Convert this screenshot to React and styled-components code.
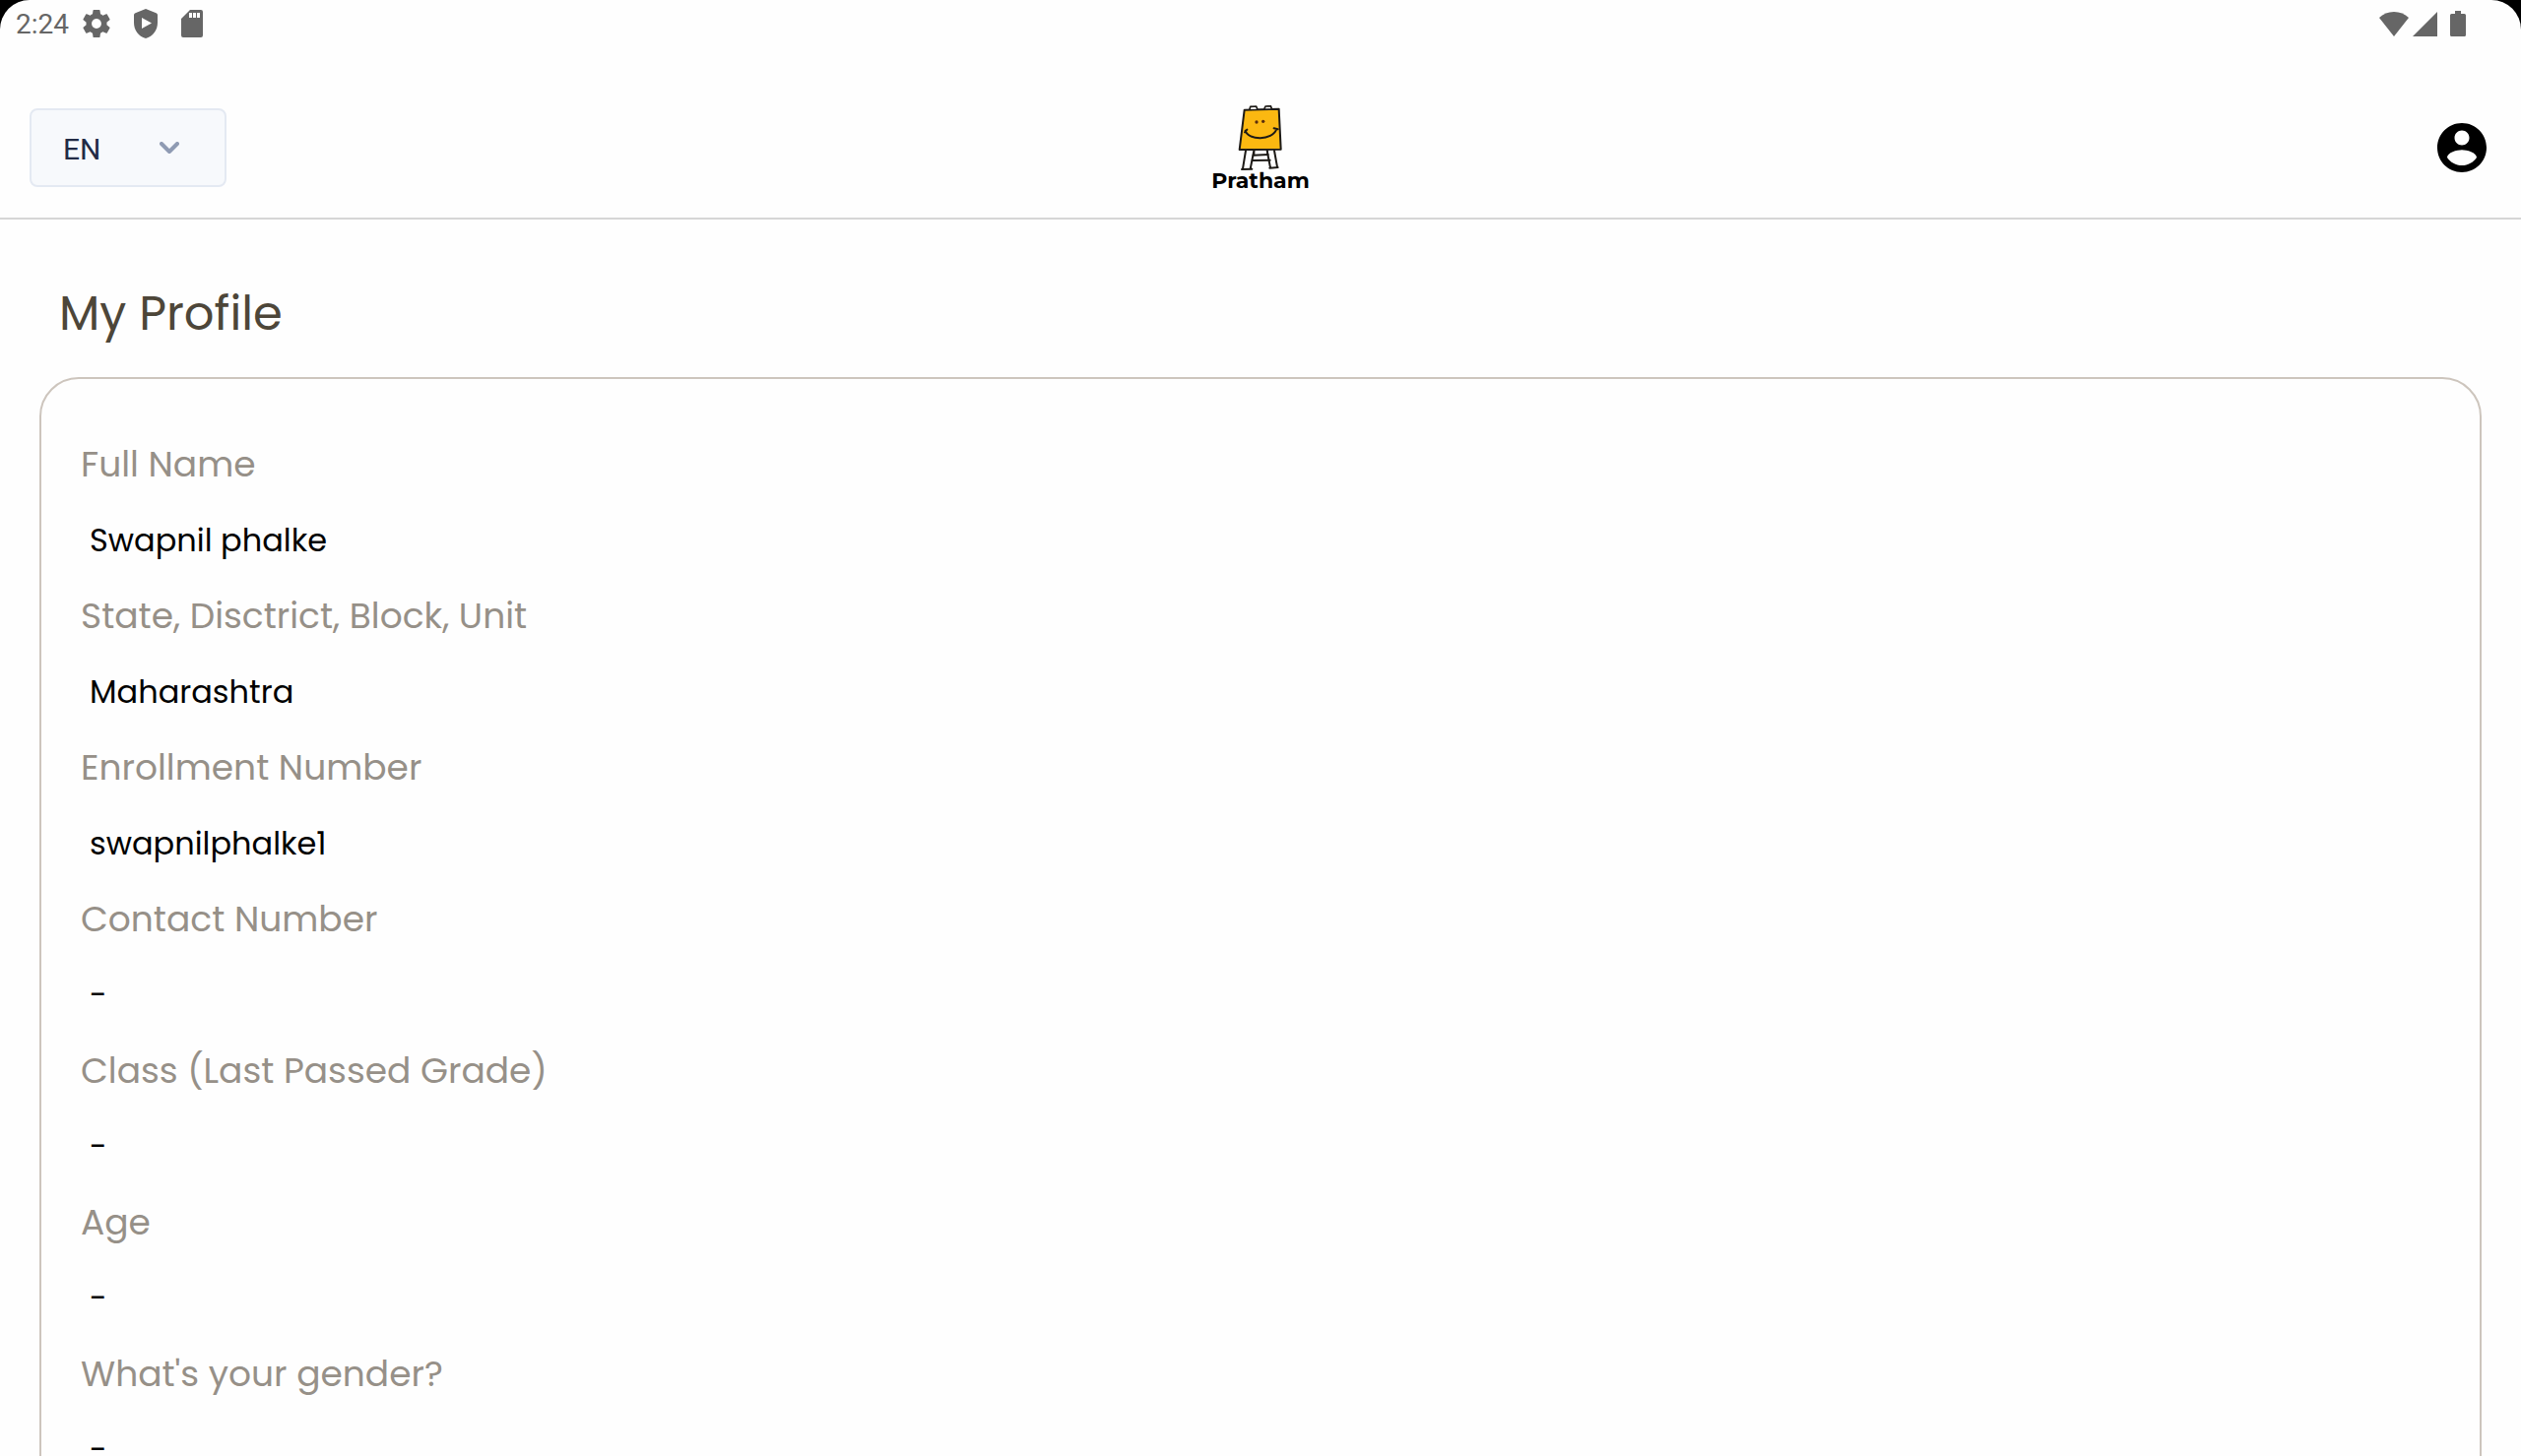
import React from "react";
import styled, { createGlobalStyle } from "styled-components";

const GlobalStyle = createGlobalStyle`
  * {
    box-sizing: border-box;
  }

  body {
    margin: 0;
    background-color: #000;
    font-family: Poppins, Inter, sans-serif;
  }
`;

const Screen = styled.div`
  display: flex;
  flex-direction: column;
  height: 100vh;
  overflow: hidden;
  border-radius: 30px 30px 0 0;
  background-color: #fefefe;
`;

const StatusBar = styled.div`
  display: flex;
  justify-content: space-between;
  align-items: center;
  height: 48px;
  flex-shrink: 0;
  padding: 0 56px 0 16px;
  color: #666;
  font-family: Roboto, sans-serif;
  font-size: 28px;

  svg {
    display: block;
    fill: currentColor;
  }
`;

const StatusGroup = styled.div`
  display: flex;
  align-items: center;
  gap: ${(props) => props.$gap}px;
`;

const Time = styled.span`
  margin-right: -10px;
`;

const Battery = styled.span`
  margin-left: 9px;
`;

const Header = styled.header`
  display: grid;
  grid-template-columns: 1fr auto 1fr;
  align-items: center;
  height: 175px;
  flex-shrink: 0;
  padding: 31px 30px 0;
  border-bottom: 2px solid #d6d6d6;
`;

const LanguagePicker = styled.label`
  display: grid;
  align-items: center;
  width: 200px;
  height: 80px;

  select,
  svg {
    grid-area: 1 / 1;
  }

  select {
    width: 100%;
    height: 100%;
    padding: 2px 32px 0;
    appearance: none;
    border: 2px solid #e4e9f2;
    border-radius: 8px;
    background-color: #f7f9fc;
    color: #222b45;
    font-family: Roboto, sans-serif;
    font-size: 30px;
  }

  svg {
    justify-self: end;
    margin-right: 48px;
    pointer-events: none;
  }
`;

const Logo = styled.div`
  display: flex;
  flex-direction: column;
  align-items: center;
  padding-top: 2px;
  color: #000;
  font-family: Montserrat, Inter, sans-serif;
  font-size: 22px;
  font-weight: 700;
  line-height: 22px;

  svg {
    display: block;
  }
`;

const AccountButton = styled.button`
  display: flex;
  justify-self: end;
  padding: 5px;
  border: 0;
  background: none;
  color: #000;
  cursor: pointer;
`;

const Content = styled.main`
  flex: 1;
  min-height: 0;
  padding: 60px 40px 40px;
  overflow-y: auto;
  scrollbar-width: none;
`;

const Title = styled.h1`
  margin: 0 0 28px;
  padding: 0 20px;
  color: #4d4639;
  font-size: 48px;
  font-weight: 400;
  line-height: 72px;
`;

const ProfileCard = styled.dl`
  margin: 0;
  padding: 48px 40px;
  border: 2px solid #cdc5bd;
  border-radius: 40px;
`;

const Label = styled.dt`
  color: #969088;
  font-size: 36px;
  line-height: 78px;
`;

const Value = styled.dd`
  margin: 0;
  padding-left: 9px;
  color: #000;
  font-size: 32px;
  line-height: 76px;
`;

const fields = [
  { label: "Full Name", value: "Swapnil phalke" },
  { label: "State, Disctrict, Block, Unit", value: "Maharashtra" },
  { label: "Enrollment Number", value: "swapnilphalke1" },
  { label: "Contact Number", value: "-" },
  { label: "Class (Last Passed Grade)", value: "-" },
  { label: "Age", value: "-" },
  { label: "What's your gender?", value: "-" },
];

const GearIcon = () => (
  <svg width="28" height="28" viewBox="2 2 20 20">
    <path d="M19.43 12.98c.04-.32.07-.64.07-.98s-.03-.66-.07-.98l2.11-1.65c.19-.15.24-.42.12-.64l-2-3.46c-.12-.22-.39-.3-.61-.22l-2.49 1c-.52-.4-1.08-.73-1.69-.98l-.38-2.65C14.46 2.18 14.25 2 14 2h-4c-.25 0-.46.18-.49.42l-.38 2.65c-.61.25-1.17.59-1.69.98l-2.49-1c-.23-.09-.49 0-.61.22l-2 3.46c-.13.22-.07.49.12.64l2.11 1.65c-.04.32-.07.65-.07.98s.03.66.07.98l-2.11 1.65c-.19.15-.24.42-.12.64l2 3.46c.12.22.39.3.61.22l2.49-1c.52.4 1.08.73 1.69.98l.38 2.65c.03.24.24.42.49.42h4c.25 0 .46-.18.49-.42l.38-2.65c.61-.25 1.17-.59 1.69-.98l2.49 1c.23.09.49 0 .61-.22l2-3.46c.12-.22.07-.49-.12-.64l-2.11-1.65zM12 15.5c-1.93 0-3.5-1.57-3.5-3.5s1.57-3.5 3.5-3.5 3.5 1.57 3.5 3.5-1.57 3.5-3.5 3.5z" />
  </svg>
);

const ShieldIcon = () => (
  <svg width="24" height="30" viewBox="0 0 24 30">
    <path
      fillRule="evenodd"
      d="M12 0 22.600 4.200Q24 4.800 24 6.200V14C24 21.500 19.500 28 12 30 4.500 28 0 21.500 0 14V6.200Q0 4.800 1.400 4.200ZM8 9v11l10-5.500Z"
    />
  </svg>
);

const SdCardIcon = () => (
  <svg width="22" height="28" viewBox="0 0 22 28">
    <path
      fillRule="evenodd"
      d="M9 0H20Q22 0 22 2V26Q22 28 20 28H2Q0 28 0 26V9ZM8 3v5h3V3ZM12 3v5h3V3ZM16 3v5h3V3Z"
    />
  </svg>
);

const WifiIcon = () => (
  <svg width="30" height="25" viewBox="0 0 30 25">
    <path d="M0 6Q6 0 15 0T30 6L15 25Z" />
  </svg>
);

const SignalIcon = () => (
  <svg width="25" height="25" viewBox="0 0 25 25">
    <path d="M25 0V25H0Z" />
  </svg>
);

const BatteryIcon = () => (
  <svg width="16" height="26" viewBox="0 0 16 26">
    <path d="M5 0h6v3h3.500Q16 3 16 4.500v20Q16 26 14.500 26h-13Q0 26 0 24.500v-20Q0 3 1.500 3H5Z" />
  </svg>
);

const ChevronIcon = () => (
  <svg width="20" height="12" viewBox="0 0 20 12" fill="none">
    <path d="M2 2l8 8 8-8" stroke="#8f9bb3" strokeWidth="4" strokeLinecap="round" strokeLinejoin="round" />
  </svg>
);

const AccountIcon = () => (
  <svg width="50" height="50" viewBox="2 2 20 20" fill="currentColor">
    <path d="M12 2C6.480 2 2 6.480 2 12s4.480 10 10 10 10-4.480 10-10S17.520 2 12 2zm0 3c1.660 0 3 1.340 3 3s-1.340 3-3 3-3-1.340-3-3 1.340-3 3-3zm0 14.200c-2.500 0-4.710-1.280-6-3.220.03-1.990 4-3.080 6-3.080 1.990 0 5.970 1.090 6 3.080-1.290 1.940-3.500 3.220-6 3.220z" />
  </svg>
);

// smiling easel
const EaselIcon = () => (
  <svg width="46" height="66" viewBox="172 54 138 198" fill="none" stroke="#1d1a16" strokeLinecap="round" strokeLinejoin="round">
    <path d="M196 192L187 247M221 192L210 248M184 249L215 248" strokeWidth="6" />
    <path d="M261 192L271 244M283 192L292 242M269 245L294 243" strokeWidth="6" />
    <path d="M219 206L264 204M216 222L270 221" strokeWidth="6" />
    <path d="M222 193V206M263 193V202" strokeWidth="4" />
    <path d="M192 68L297 65L303 188L177 189Z" fill="#fbb811" strokeWidth="6" />
    <path d="M208 66L210 58L228 57L231 65M253 64L256 57L272 56L275 64" fill="#fff" strokeWidth="5" />
    <path d="M195 131C203 161 277 163 290 126M193 136L200 128M282 124L294 127" strokeWidth="6" />
    <circle cx="229" cy="105" r="5" fill="#5a2d0c" stroke="none" />
    <circle cx="249" cy="103" r="5" fill="#5a2d0c" stroke="none" />
  </svg>
);

const App = () => (
  <Screen>
    <GlobalStyle />
    <StatusBar>
      <StatusGroup $gap={24}>
        <Time>2:24</Time>
        <GearIcon />
        <ShieldIcon />
        <SdCardIcon />
      </StatusGroup>
      <StatusGroup $gap={4}>
        <WifiIcon />
        <SignalIcon />
        <Battery>
          <BatteryIcon />
        </Battery>
      </StatusGroup>
    </StatusBar>
    <Header>
      <LanguagePicker>
        <select aria-label="Language" defaultValue="en">
          <option value="en">EN</option>
        </select>
        <ChevronIcon />
      </LanguagePicker>
      <Logo>
        <EaselIcon />
        <span>Pratham</span>
      </Logo>
      <AccountButton type="button" aria-label="Account">
        <AccountIcon />
      </AccountButton>
    </Header>
    <Content>
      <Title>My Profile</Title>
      <ProfileCard>
        {fields.map((field) => (
          <React.Fragment key={field.label}>
            <Label>{field.label}</Label>
            <Value>{field.value}</Value>
          </React.Fragment>
        ))}
      </ProfileCard>
    </Content>
  </Screen>
);

export default App;
